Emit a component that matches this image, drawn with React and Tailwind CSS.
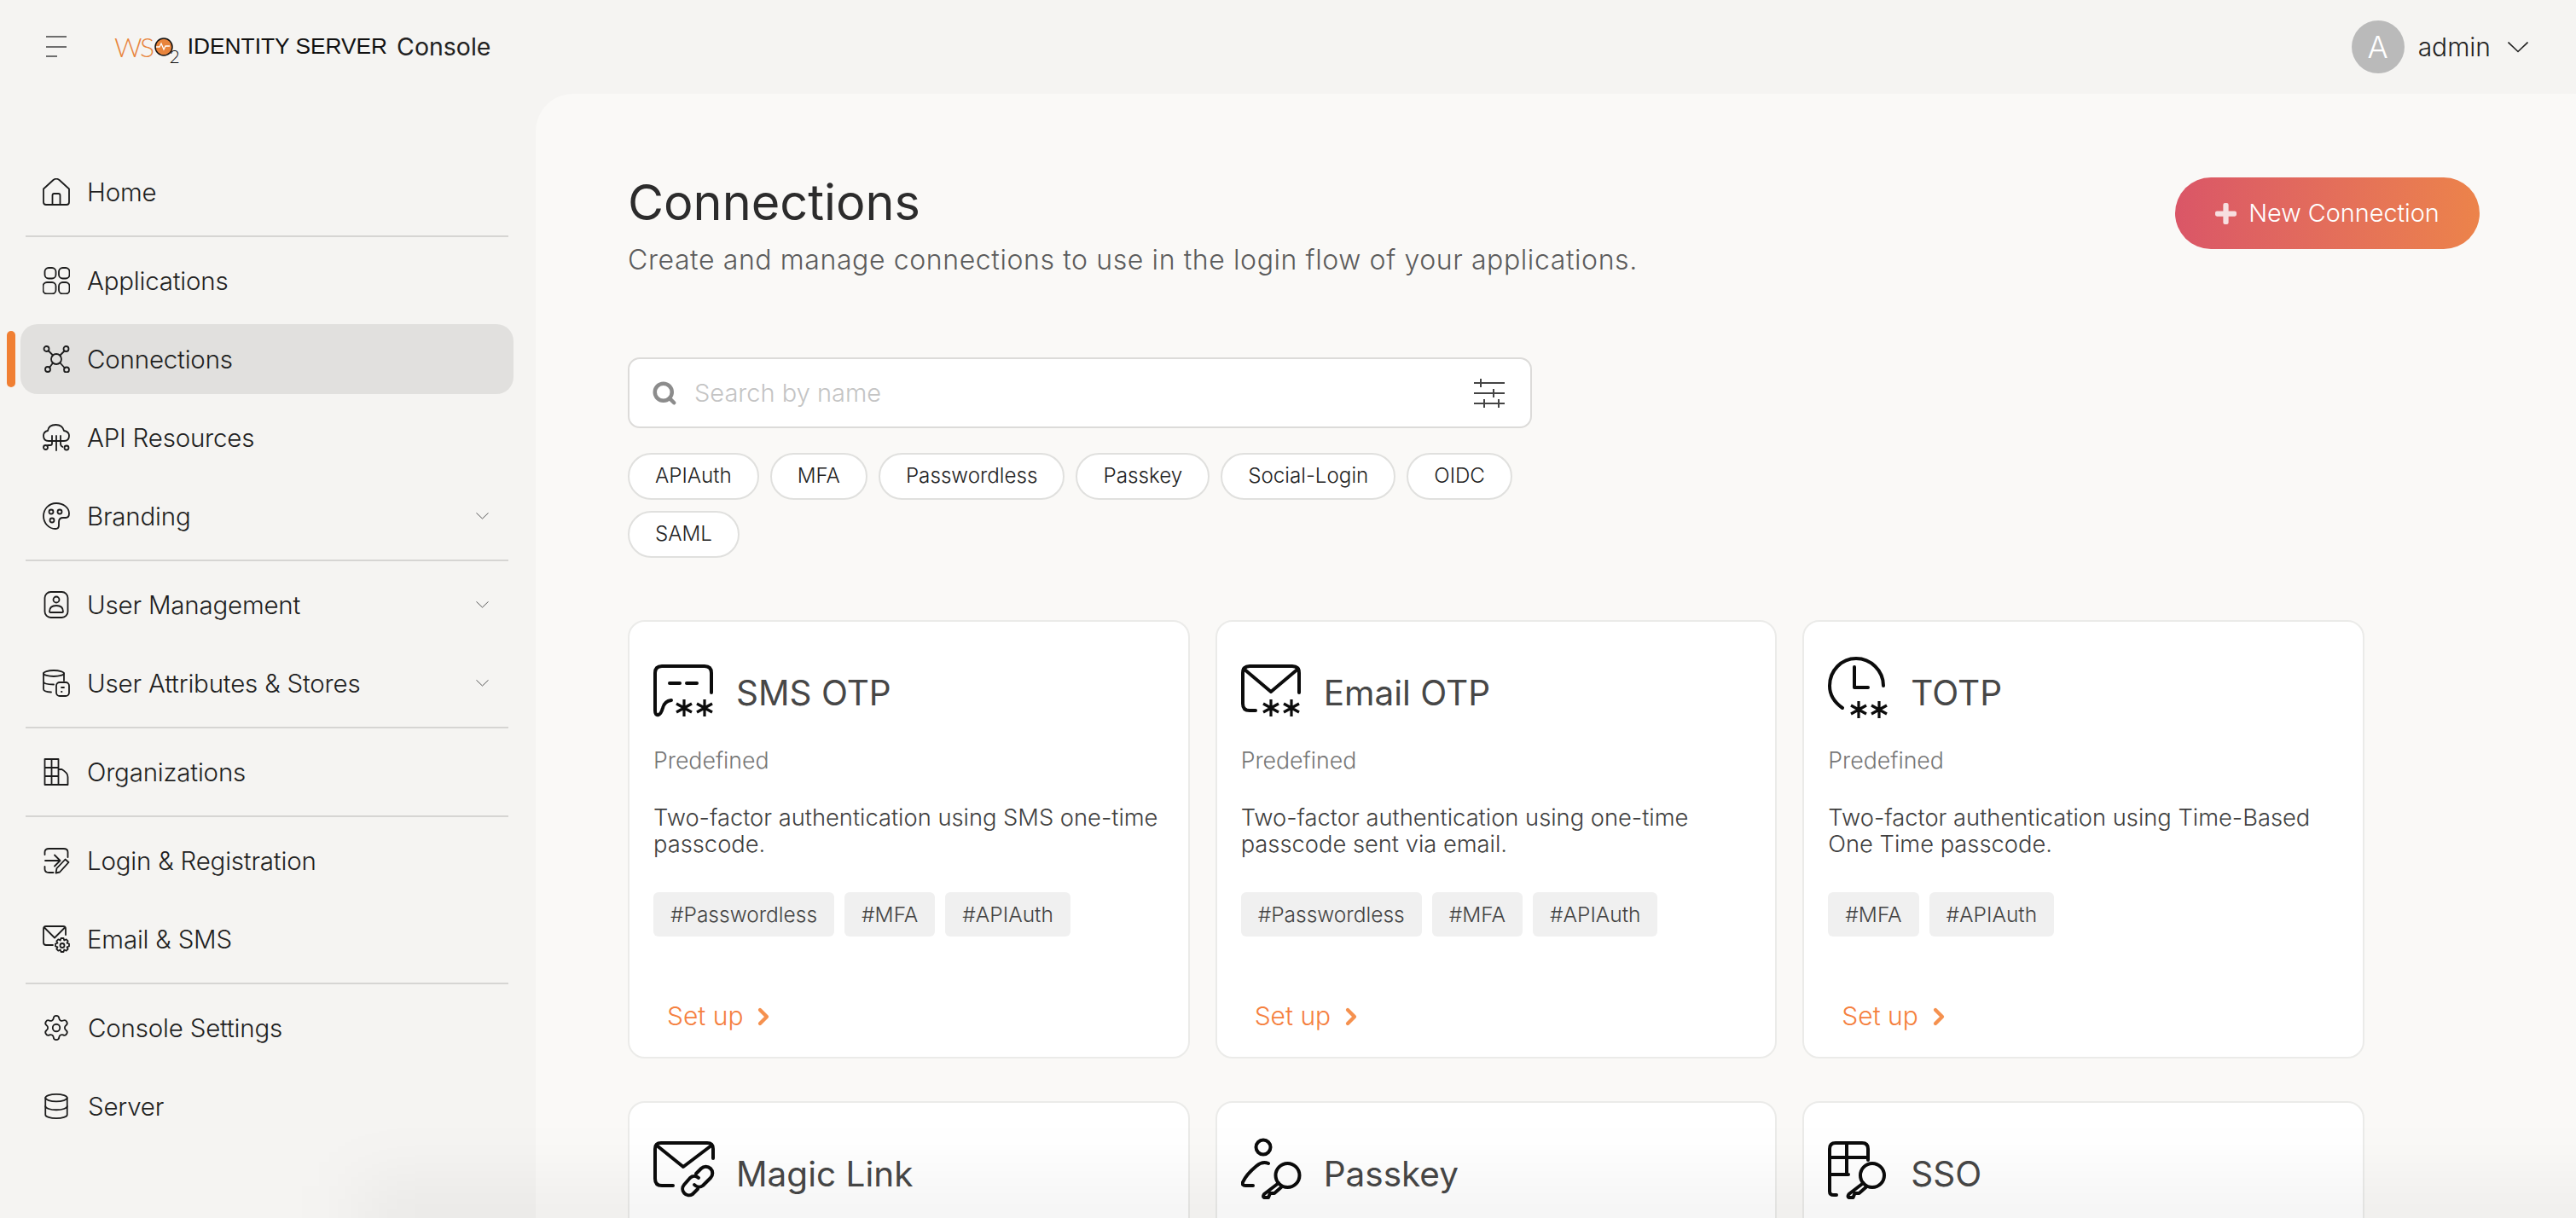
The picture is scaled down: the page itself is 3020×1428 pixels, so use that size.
import React from 'react';
import { ChevronRight, Database, Search, Settings } from 'lucide-react';

// Sidebar icons, all drawn on a 32 box
const Icon = ({ children, className = '' }) => (
  <svg viewBox="0 0 32 32" fill="none" stroke="#1c1c1c" strokeWidth="1.8" strokeLinecap="round" strokeLinejoin="round" className={`w-[32px] h-[32px] shrink-0 ${className}`}>
    {children}
  </svg>
);

const HomeIcon = () => (
  <Icon>
    <path d="M1 12.5 12.5 2q3.5-2.6 7 0L31 12.5V28q0 3-3 3H4q-3 0-3-3Z" />
    <path d="M11.5 31V20q0-2 2-2h5q2 0 2 2v11" />
  </Icon>
);
const AppsIcon = () => (
  <Icon>
    <rect x="2.5" y="1" width="13" height="12.5" rx="4.5" />
    <rect x="19" y="1" width="12.5" height="12.5" rx="4.5" />
    <rect x="0.5" y="18" width="15" height="13.5" rx="4.5" />
    <rect x="19" y="18" width="12.5" height="13.5" rx="4.5" />
  </Icon>
);
const ConnIcon = () => (
  <Icon>
    <circle cx="16" cy="16" r="6" />
    <circle cx="4.5" cy="4" r="3" />
    <circle cx="27.5" cy="4" r="3" />
    <circle cx="6" cy="28" r="3" />
    <circle cx="28" cy="28.5" r="3" />
    <path d="m7 6.5 5 5M25.5 6.5l-5 5M8 26l4-5.5M26 26.5l-5.5-6" />
  </Icon>
);
const ApiIcon = () => (
  <Icon>
    <path d="M7 20q-6 0-6-6 0-5 5-6 1-7 9.5-7 7.5 0 9.5 7 6 1 6 6 0 6-6 6H7Z" />
    <path d="M16 14v17M11 14v9q0 2-2 2H6M21 14v9q0 3 2.5 4" />
    <circle cx="3.5" cy="27.5" r="2.5" />
    <circle cx="28" cy="28" r="2.5" />
  </Icon>
);
const PaletteIcon = () => (
  <Icon>
    <path d="M16 1C7 1 1 8 1 16s6 15 14 15q4 0 4-4v-4q0-5 5-5h3q4 0 4-5C31 6 24 1 16 1Z" />
    <circle cx="10" cy="11" r="2.5" />
    <circle cx="20" cy="11" r="2.5" />
    <circle cx="11" cy="21" r="2.5" />
  </Icon>
);
const UserIcon = () => (
  <Icon>
    <rect x="2.5" y="1" width="27" height="30" rx="7" />
    <circle cx="16" cy="10" r="3.5" />
    <path d="M8 24q0-7 8-7t8 7q0 1-1 1H9q-1 0-1-1Z" />
  </Icon>
);
const AttrIcon = () => (
  <Icon>
    <ellipse cx="13" cy="4.5" rx="12" ry="3.5" />
    <path d="M1 4.5V23q0 3 9 3.5M25 4.5V13M1 14q0 3.5 12 3.5" />
    <rect x="16" y="15" width="15" height="16" rx="4" />
    <path d="M22 21h3M22 26h.5" />
  </Icon>
);
const OrgIcon = () => (
  <Icon>
    <path d="M2.5 1h16v30h-16ZM2.5 11h16M2.5 21h16M10.5 1v30M18.5 13h4q7 4 7 9v9h-11" />
  </Icon>
);
const LoginIcon = () => (
  <Icon>
    <path d="M2.5 9V6q0-4 5-4h17q5 0 5 4v6M2.5 23v3q0 4 5 4h5" />
    <path d="M3 16h17M14 9.5l6.5 6.5-6.5 6.5" />
    <path d="m15.5 30.5 1-5.5L26.5 14.5l4 3.5L20 29.5Z" />
  </Icon>
);
const MailGearIcon = () => (
  <Icon>
    <path d="M12 23H4q-3 0-3-3V4q0-3 3-3h20q3 0 3 3v7" />
    <path d="m2 2.5 12 12 12-12" />
    <circle cx="23" cy="23.5" r="2.5" />
    <path d="m21.5 15 3 0 .8 2.5 2.4-1.2 2 2-1.2 2.4 2.5.8v3l-2.5.8 1.2 2.4-2 2-2.4-1.2-.8 2.5h-3l-.8-2.5-2.4 1.2-2-2 1.2-2.4-2.5-.8v-3l2.5-.8-1.2-2.4 2-2 2.4 1.2Z" />
  </Icon>
);

const Stars = ({ x1, x2, y }) => (
  <g strokeWidth="3.2" strokeLinecap="butt">
    {[x1, x2].map((x) => (
      <path key={x} d={`M${x} ${y - 10}v20M${x - 9} ${y - 5}l18 10M${x - 9} ${y + 5}l18-10`} />
    ))}
  </g>
);

// Card icons, 72 box
const CardIcon = ({ children }) => (
  <svg viewBox="0 0 72 72" fill="none" stroke="#0c0c0c" strokeWidth="4" strokeLinecap="round" strokeLinejoin="round" className="w-[72px] h-[72px] shrink-0">
    {children}
  </svg>
);
const SmsIcon = () => (
  <CardIcon>
    <path d="M68 42V19q0-8-8-8H10q-8 0-8 8v44q0 6 4 5 3-1 5-8 2-8 10-9" />
    <path d="M19 31h12M39 31h12" />
    <Stars x1={36} x2={60} y={60} />
  </CardIcon>
);
const EmailIcon = () => (
  <CardIcon>
    <path d="M68 42V19q0-8-8-8H10q-8 0-8 8v36q0 8 8 8h7" />
    <path d="m3 14 32 27 32-27" />
    <Stars x1={35} x2={59} y={60} />
  </CardIcon>
);
const TotpIcon = () => (
  <CardIcon>
    <path d="M17 60C7 53 2 44 2 34 2 16 16 2 33 2s32 14 32 32" />
    <path d="M31 12v24h16" />
    <Stars x1={36} x2={60} y={62} />
  </CardIcon>
);
const MagicIcon = () => (
  <CardIcon>
    <path d="M70 24V13q0-7-7-7H9q-7 0-7 7v35q0 8 8 8h13" />
    <path d="m4 9 31 25L68 9" />
    <path d="M50 42l6-6a7.5 7.5 0 0 1 11 11l-9 9a7.5 7.5 0 0 1-10-1" />
    <path d="M53 47a7.5 7.5 0 0 0-10 0l-7 8a7.5 7.5 0 0 0 10 11l6-6" />
  </CardIcon>
);
const Key = ({ dx = 0 }) => (
  <g transform={`translate(${dx} 0)`}>
    <circle cx="54.5" cy="44" r="14" />
    <path d="M44 53 27 66q-2 3 0 4h5l2-5h5l8-7" />
  </g>
);
const PasskeyIcon = () => (
  <CardIcon>
    <circle cx="26" cy="11" r="8.5" />
    <path d="M32 30q-7-3-14 3Q6 43 2 52q-1 4 3 4h9" />
    <Key />
  </CardIcon>
);
const SsoIcon = () => (
  <CardIcon>
    <path d="M47 26V13q0-7-7-7H9q-7 0-7 7v50q0 4 5 4h3M2 23h45M2 43h22M22 6v37" />
    <Key dx={-2.5} />
  </CardIcon>
);

const navGroups = [
  [{ label: 'Home', icon: HomeIcon }],
  [
    { label: 'Applications', icon: AppsIcon },
    { label: 'Connections', icon: ConnIcon, active: true },
    { label: 'API Resources', icon: ApiIcon },
    { label: 'Branding', icon: PaletteIcon, sub: true },
  ],
  [
    { label: 'User Management', icon: UserIcon, sub: true },
    { label: 'User Attributes & Stores', icon: AttrIcon, sub: true },
  ],
  [{ label: 'Organizations', icon: OrgIcon }],
  [
    { label: 'Login & Registration', icon: LoginIcon },
    { label: 'Email & SMS', icon: MailGearIcon },
  ],
  [
    { label: 'Console Settings', icon: () => <Settings size={34} strokeWidth={1.25} color="#1c1c1c" className="-ml-px shrink-0" /> },
    { label: 'Server', icon: () => <Database size={34} strokeWidth={1.25} color="#1c1c1c" className="-ml-px shrink-0" /> },
  ],
];

const filters = ['APIAuth', 'MFA', 'Passwordless', 'Passkey', 'Social-Login', 'OIDC', 'SAML'];

const cards = [
  { title: 'SMS OTP', icon: SmsIcon, desc: 'Two-factor authentication using SMS one-time passcode.', tags: ['#Passwordless', '#MFA', '#APIAuth'] },
  { title: 'Email OTP', icon: EmailIcon, desc: 'Two-factor authentication using one-time passcode sent via email.', tags: ['#Passwordless', '#MFA', '#APIAuth'] },
  { title: 'TOTP', icon: TotpIcon, desc: 'Two-factor authentication using Time-Based One Time passcode.', tags: ['#MFA', '#APIAuth'] },
  { title: 'Magic Link', icon: MagicIcon },
  { title: 'Passkey', icon: PasskeyIcon },
  { title: 'SSO', icon: SsoIcon },
];

const Caret = ({ className }) => (
  <svg viewBox="0 0 24 13" fill="none" stroke="currentColor" strokeWidth="1.6" className={className}>
    <path d="m0.5 0.5 11.5 11 11.5-11" />
  </svg>
);

function NavItem({ item }) {
  const I = item.icon;
  return (
    <div className="relative">
      {item.active && <div className="absolute left-[-16px] top-[8px] w-[10px] h-[66px] rounded-full bg-[#f07f33]" />}
      <div className={`h-[82px] flex items-center pl-[26px] pr-[29px] rounded-[20px] ${item.active ? 'bg-[#e1e0de]' : ''}`}>
        <I />
        <span className="ml-[20px] flex-1 text-[29.5px] font-light tracking-[-0.2px] text-[#1f1f1f]">{item.label}</span>
        {item.sub && <Caret className="w-[15px] h-[8px] text-[#555]" />}
      </div>
    </div>
  );
}

function Sidebar() {
  return (
    <aside className="w-[628px] shrink-0 pt-[74px] pl-[24px] pr-[26px] flex flex-col gap-[10px]">
      {navGroups.map((group, i) => (
        <React.Fragment key={i}>
          {i > 0 && <div className="h-[2px] mx-[6px] bg-[#d6d5d3]" />}
          {group.map((item) => <NavItem key={item.label} item={item} />)}
        </React.Fragment>
      ))}
    </aside>
  );
}

function Card({ card }) {
  const I = card.icon;
  return (
    <div className="h-[514px] rounded-[20px] border-2 border-[#ebebe9] bg-white pt-[41px] px-[28px]">
      <div className="flex items-center h-[72px] gap-[25px]">
        <I />
        <span className="mt-[14px] text-[40.5px] text-[#474747]">{card.title}</span>
      </div>
      {card.desc && (
        <>
          <div className="mt-[31px] text-[26.7px] font-light text-[#777] leading-[36px]">Predefined</div>
          <p className="mt-[34px] text-[27.3px] font-light text-[#3f3f3f] leading-[31px]">{card.desc}</p>
          <div className="mt-[41px] flex gap-[12px]">
            {card.tags.map((t) => (
              <span key={t} className="h-[52px] px-[20px] flex items-center rounded-[6px] bg-[#f0f0f0] text-[24.5px] font-light text-[#444]">{t}</span>
            ))}
          </div>
          <div className="mt-[71px] ml-[16px] flex items-center gap-[8px] text-[30px] font-light text-[#f5803e]">
            Set up <ChevronRight size={32} strokeWidth={3.2} color="#f5914f" />
          </div>
        </>
      )}
    </div>
  );
}

export default function App() {
  return (
    <div className="relative h-screen overflow-hidden bg-[#f5f4f2] font-['Inter',sans-serif]">
      <header className="h-[110px] flex items-center pl-[54px] pr-[56px]">
        <svg viewBox="0 0 24 26" stroke="#6e6e6e" strokeWidth="2" className="w-[24px] h-[26px]">
          <path d="M0 1h24M0 13h24M0 24h13" />
        </svg>
        <div className="ml-[56px] flex items-center">
          <span className="text-[32px] leading-none font-['Lato',sans-serif] font-light text-[#e8843c] tracking-[-2.5px]">WS</span>
          <svg viewBox="0 0 32 30" className="w-[32px] h-[30px] ml-[1px] mt-[8px]">
            <circle cx="12" cy="11" r="10" fill="#e8843c" stroke="#111" strokeWidth="1.5" />
            <path d="M3 11h4l2-4 3 7 2-4h5" fill="none" stroke="#fff" strokeWidth="1.3" />
          </svg>
          <span className="-ml-[13px] mt-[20px] text-[21px] leading-none font-['Lato',sans-serif] font-light text-[#111]">2</span>
          <span className="ml-[9px] font-['Liberation_Sans',sans-serif] text-[26.3px] text-[#111]">IDENTITY SERVER</span>
          <span className="ml-[11px] text-[28.5px] text-[#222]">Console</span>
        </div>
        <div className="ml-auto flex items-center">
          <div className="w-[62px] h-[62px] rounded-full bg-[#bababa] flex items-center justify-center text-[36px] font-light text-white">A</div>
          <span className="ml-[16px] text-[30px] font-light text-[#222]">admin</span>
          <Caret className="ml-[20px] w-[24px] h-[13px] text-[#222]" />
        </div>
      </header>

      <div className="flex h-[1318px]">
        <Sidebar />
        <main className="flex-1 rounded-tl-[44px] bg-[#faf9f7] pl-[108px] pr-[113px] pt-[92px]">
          <div className="flex justify-between items-start">
            <div>
              <h1 className="mt-px text-[57.6px] leading-[68px] font-normal text-[#2c2c2c]">Connections</h1>
              <p className="mt-[14px] text-[32px] leading-[40px] font-light tracking-[0.6px] text-[#5c5c5c]">Create and manage connections to use in the login flow of your applications.</p>
            </div>
            <button className="mt-[6px] h-[84px] w-[357px] rounded-full bg-gradient-to-r from-[#da5667] to-[#ec834a] flex items-center justify-center gap-[14px] text-[28.8px] font-light text-white">
              <svg viewBox="0 0 24 24" className="w-[25px] h-[25px]" fill="#f7dfe0"><path d="M9 2q0-2 2-2h2q2 0 2 2v7h7q2 0 2 2v2q0 2-2 2h-7v7q0 2-2 2h-2q-2 0-2-2v-7H2q-2 0-2-2v-2q0-2 2-2h7Z" /></svg>
              New Connection
            </button>
          </div>

          <div className="mt-[94px] w-[1060px] h-[83px] rounded-[14px] border-2 border-[#dcdbd9] bg-white flex items-center pl-[26px] pr-[30px]">
            <Search size={30} strokeWidth={3.6} color="#8c8c8c" />
            <span className="ml-[20px] text-[29px] font-light text-[#c4c4c4]">Search by name</span>
            <svg viewBox="0 0 36 34" fill="none" stroke="#444" strokeWidth="2" className="ml-auto w-[36px] h-[34px]">
              <path d="M0 5h36M0 17h36M0 29h36M8 0v10M23 12v10M12 24v10M29 24v10" />
            </svg>
          </div>

          <div className="mt-[29px] w-[1060px] flex flex-wrap gap-x-[13px] gap-y-[13px]">
            {filters.map((f) => (
              <span key={f} className="h-[55px] px-[30px] flex items-center rounded-full border-2 border-[#e0e0de] bg-white text-[24.2px] font-light text-[#222]">{f}</span>
            ))}
          </div>

          <div className="mt-[73px] w-[2036px] grid grid-cols-3 gap-x-[30px] gap-y-[50px]">
            {cards.map((c) => <Card key={c.title} card={c} />)}
          </div>
        </main>
      </div>

      <div className="absolute bottom-[-40px] left-[420px] right-[-100px] h-[80px] bg-black/5 blur-2xl pointer-events-none" />
    </div>
  );
}
